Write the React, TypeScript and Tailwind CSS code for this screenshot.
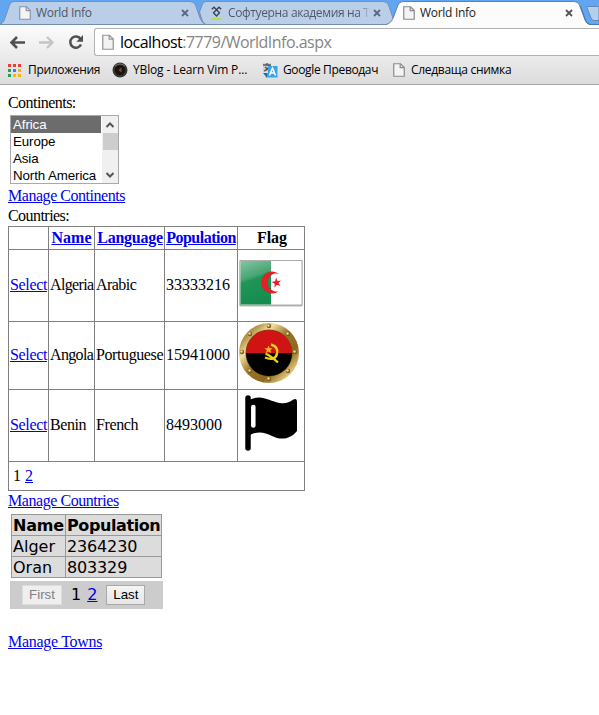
import React from "react";

const UI = "font-['Open_Sans','Noto_Sans',sans-serif]";

function PageIcon({ stroke = "#8a8a8a" }: { stroke?: string }) {
  return (
    <svg width="12" height="14" viewBox="0 0 12 14" className="block shrink-0">
      <path d="M.75 .75H7.5L11.25 4.5V13.25H.75Z" fill="#f4f4f4" stroke={stroke} strokeWidth="1.2" />
      <path d="M7.2 .8V4.7H11.2" fill="none" stroke={stroke} strokeWidth="1.2" />
    </svg>
  );
}

function CloseIcon({ color }: { color: string }) {
  return (
    <svg width="8" height="8" viewBox="0 0 8 8" className="block shrink-0">
      <path d="M1 1L7 7M7 1L1 7" stroke={color} strokeWidth="1.8" />
    </svg>
  );
}

function TabStrip() {
  return (
    <div className="relative h-[25px] bg-[#62a5f1]">
      <svg width="599" height="25" viewBox="0 0 599 25" className="absolute left-0 top-0">
        <path d="M0 24.5C3 23 4 21 5 18L9.500 5Q11 1.500 14 1.500H190Q194 1.500 195.500 5L200 18Q202 23.500 206 24.500Z" fill="#bbcee7" stroke="#7390b5" />
        <path d="M206 24.500Q203 23.500 202 20L199.500 12L202.500 4Q203.500 1.500 206 1.500H383Q387 1.500 388.500 5L393 18Q395 23.500 398 24.500Z" fill="#bbcee7" stroke="#7390b5" />
        <path d="M0 24.500H599" stroke="#728db0" />
        <path d="M386 25C390 23.500 392 21 393.500 17L398 5Q399.500 1.500 403 1.500H574Q578 1.500 579.500 5L585 20Q586.500 24 590 24.500H599V25Z" fill="#fcfcfc" />
        <path d="M386 24.500C390 23.500 392 21 393.500 17L398 5Q399.500 1.500 403 1.500H574Q578 1.500 579.500 5L585 20Q586.500 24 590 24.500H599" fill="none" stroke="#5e83b2" />
        <path d="M582 1L588 18Q590 24 594 24H599V1Z" fill="#62a5f1" />
        <path d="M586.500 6.500H599V20.500H594Q592 20.500 591 18Z" fill="#b4cfee" stroke="#6486b3" />
        <path d="M580.500 6L585.500 20Q587 24 590 24.500H599" fill="none" stroke="#4b78ad" />
      </svg>
      <div className={`relative flex h-[25px] items-center text-[12px] leading-[16px] ${UI}`}>
        <div className="flex w-[200px] shrink-0 items-center pl-[19px] text-[#4c5766]">
          <PageIcon stroke="#8496ad" />
          <span className="ml-[5px] w-[145px] whitespace-nowrap tracking-[-0.3px]">World Info</span>
          <CloseIcon color="#5b697b" />
        </div>
        <div className="flex w-[193px] shrink-0 items-center pl-[11px] text-[#4c5766]">
          <svg width="11" height="14" viewBox="0 0 11 14" className="block shrink-0">
            <path d="M.8 3.200L3 1.200L8.500 6.800L5.500 10L2.500 6.800L8 1.200L10.200 3.200" fill="none" stroke="#354052" strokeWidth="1.300" />
            <path d="M.5 13H10.500" stroke="#b4e51c" strokeWidth="1.500" />
          </svg>
          <span className="ml-[6px] w-[145px] whitespace-nowrap bg-gradient-to-r from-[#4c5766] from-90% to-transparent to-98% bg-clip-text text-transparent tracking-[-0.36px]">Софтуерна академия на Т</span>
          <CloseIcon color="#5b697b" />
        </div>
        <div className="flex shrink-0 items-center pl-[10px] text-[#222]">
          <PageIcon />
          <span className="ml-[5px] w-[145px] whitespace-nowrap tracking-[-0.3px]">World Info</span>
          <CloseIcon color="#555" />
        </div>
      </div>
    </div>
  );
}

function Toolbar() {
  return (
    <div className={`flex h-[60px] flex-col border-b border-[#a5a5a5] bg-gradient-to-b from-[#fcfcfc] to-[#dcdcdc] ${UI}`}>
      <div className="flex h-[31px] shrink-0 items-end">
        <svg width="94" height="31" viewBox="0 0 94 31" className="block">
          <path d="M25 17.500H12M17 12L11.500 17.500L17 23" fill="none" stroke="#505050" strokeWidth="2.600" />
          <path d="M39 17.500H52M47 12L52.500 17.500L47 23" fill="none" stroke="#c5c5c5" strokeWidth="2.400" />
          <path d="M80.500 14A5.600 5.600 0 1 0 81 19.500" fill="none" stroke="#505050" strokeWidth="2.500" />
          <path d="M83 10V16.700H76.300Z" fill="#505050" />
        </svg>
        <div className="flex h-[28px] flex-1 items-center rounded-l-[3px] border border-r-0 border-[#b3b3b3] bg-white pl-[7px] text-[16px] leading-[24px]">
          <svg width="12" height="16" viewBox="0 0 12 16" className="block">
            <path d="M.75 1.250H7.500L11.250 5V15.250H.75ZM7.200 1.500V5.200H11" fill="#f3f3f3" stroke="#929292" strokeWidth="1.200" />
          </svg>
          <span className="ml-[6px] whitespace-nowrap tracking-[-0.53px] text-black">localhost<span className="text-[#858585]">:7779/WorldInfo.aspx</span></span>
        </div>
      </div>
      <div className="flex flex-1 items-center pl-[8px] text-[12px] leading-[16px] text-black">
        <svg width="13" height="13" viewBox="0 0 13 13" className="block shrink-0">
          <path d="M0 0h3v3h-3zM5 0h3v3h-3zM10 0h3v3h-3z" fill="#ed3b35" />
          <path d="M0 5h3v3h-3z" fill="#2b9c55" /><path d="M5 5h3v3h-3z" fill="#2587ec" /><path d="M10 5h3v3h-3z" fill="#f7b40d" />
          <path d="M0 10h3v3h-3z" fill="#2b9c55" /><path d="M5 10h3v3h-3zM10 10h3v3h-3z" fill="#f7b40d" />
        </svg>
        <span className="ml-[7px] w-[84px] shrink-0 whitespace-nowrap tracking-[-0.3px]">Приложения</span>
        <svg width="16" height="16" viewBox="0 0 16 16" className="block shrink-0">
          <circle cx="8" cy="8" r="7.500" fill="#383634" />
          <circle cx="8" cy="8" r="5.300" fill="#171514" />
          <path d="M6.500 8L9.500 5.500V10.500Z" fill="#9c4616" />
          <path d="M3 4Q8 0 13 4" fill="none" stroke="#777" />
        </svg>
        <span className="ml-[5px] w-[129px] shrink-0 whitespace-nowrap tracking-[-0.15px]">YBlog - Learn Vim P...</span>
        <svg width="16" height="16" viewBox="0 0 16 16" className="block shrink-0">
          <path d="M1 1H9V10H1Z" fill="#d0d0d0" />
          <path d="M1 3H9M5 1V3M2 9Q7 7 7 3M3 5L8 9" fill="none" stroke="#555" strokeWidth="1.300" />
          <path d="M6 4H15.500V15.500H4L2 11H6Z" fill="#3aa5e6" />
          <path d="M1 11L5 11L5 15.500Z" fill="#176dac" />
          <path d="M7.500 13.500L10.500 6L13.500 13.500M8.800 11H12.300" fill="none" stroke="#fff" strokeWidth="1.500" />
        </svg>
        <span className="ml-[5px] w-[110px] shrink-0 whitespace-nowrap tracking-[-0.35px]">Google Преводач</span>
        <PageIcon />
        <span className="ml-[6px] whitespace-nowrap tracking-[-0.3px]">Следваща снимка</span>
      </div>
    </div>
  );
}

function Link({ children, className = "" }: { children: React.ReactNode; className?: string }) {
  return <a href="#" className={`whitespace-nowrap text-[#0000ee] underline ${className}`}>{children}</a>;
}

function ContinentList() {
  return (
    <div className="ml-[2px] mt-[2px] flex h-[69px] w-[109px] border border-[#a9a9a9] bg-white font-['Liberation_Sans',Arial,sans-serif] text-[13.333px] leading-[17px]">
      <div className="w-[90px] tracking-[-0.1px]">
        <div className="h-[17px] bg-[#6c6c6c] pl-[2px] text-white">Africa</div>
        <div className="h-[17px] pl-[2px]">Europe</div>
        <div className="h-[17px] pl-[2px]">Asia</div>
        <div className="h-[17px] whitespace-nowrap pl-[2px]">North America</div>
      </div>
      <div className="ml-px flex w-[16px] flex-col items-center bg-[#f0f0f0]">
        <svg width="16" height="17" viewBox="0 0 16 17" className="block"><path d="M4.500 11L8 7.500L11.500 11" fill="none" stroke="#555" strokeWidth="2" /></svg>
        <div className="h-[17px] w-[15px] bg-[#cdcdcd]" />
        <svg width="16" height="17" viewBox="0 0 16 17" className="mt-auto block"><path d="M4.500 7L8 10.500L11.500 7" fill="none" stroke="#555" strokeWidth="2" /></svg>
      </div>
    </div>
  );
}

function AlgeriaFlag() {
  return (
    <svg width="66" height="71" viewBox="0 0 66 71" className="block">
      <defs>
        <linearGradient id="dzGreen" x1="0" y1="0" x2="0.25" y2="1">
          <stop offset="0" stopColor="#84c5a1" /><stop offset=".42" stopColor="#48a574" /><stop offset=".5" stopColor="#1f9658" /><stop offset="1" stopColor="#168d4e" />
        </linearGradient>
      </defs>
      <rect x="1.500" y="11" width="63" height="45.500" rx="1" fill="#bbb" />
      <rect x="2" y="10.500" width="62" height="44.500" fill="#fff" stroke="#999" strokeWidth=".8" />
      <rect x="2.500" y="11" width="30.500" height="43.500" fill="url(#dzGreen)" />
      <path d="M41 24A11 11 0 1 0 41 41A8.500 9 0 1 1 41 24Z" fill="#e12028" />
      <path d="M38 27.500L39.500 31L43 30.500L40.500 33L42.500 36L39 34.800L36.500 37.500L36.700 33.800L33.500 32L37.200 31.200Z" fill="#e12028" />
    </svg>
  );
}

function AngolaFlag() {
  const rivets = [[31, 4], [50, 12], [57, 30], [50, 49], [31, 57], [12, 49], [4, 30], [12, 12]];
  return (
    <svg width="66" height="67" viewBox="0 0 66 67" className="block">
      <defs>
        <linearGradient id="aoGold" x1="0" y1="0" x2="1" y2="1">
          <stop offset="0" stopColor="#8d6b26" /><stop offset=".18" stopColor="#b8954b" /><stop offset=".3" stopColor="#efe1a0" /><stop offset=".48" stopColor="#9a7428" /><stop offset=".68" stopColor="#8d691e" /><stop offset=".85" stopColor="#dfca7c" /><stop offset="1" stopColor="#80601c" />
        </linearGradient>
      </defs>
      <circle cx="31" cy="31" r="30" fill="url(#aoGold)" />
      <circle cx="31" cy="31" r="23.500" fill="#6e4e13" />
      <path d="M8 31A23 23 0 0 1 54 31Z" fill="#d01414" />
      <path d="M8 31A23 23 0 0 0 54 31Z" fill="#000" />
      {rivets.map(([x, y], i) => (
        <g key={i}><circle cx={x} cy={y} r="2.200" fill="#7e5d20" /><circle cx={x - 0.5} cy={y - 0.5} r="1.200" fill="#eadb9b" /></g>
      ))}
      <path d="M33 22.500Q41 25 39 32Q36.500 39.500 27 35.500" fill="none" stroke="#f0d018" strokeWidth="2.400" />
      <path d="M27.500 31.500Q33 34 40 40.500" fill="none" stroke="#f0d018" strokeWidth="2.200" />
      <path d="M30.500 23.500L31.600 26.200L34.500 26.200L32.300 28.200L33.200 31L30.600 29.400L28 31L28.800 28.200L26.500 26.200H29.500Z" fill="#f0c018" />
    </svg>
  );
}

function BlackFlag() {
  return (
    <svg width="66" height="71" viewBox="0 0 66 71" className="block">
      <path d="M10 8V58" stroke="#000" strokeWidth="5.500" strokeLinecap="round" />
      <path d="M12 9.500C24 4 31 11 42 13C50 14 53 11 55.500 9.500Q59 8 59 12V41C52 50 42 50 34 46C26 42 20 41 12 45Z" fill="#000" />
      <path d="M15.300 17V35.500" stroke="#fff" strokeWidth="4.500" strokeLinecap="round" />
    </svg>
  );
}

function CountriesTable() {
  const rows = [
    { name: "Algeria", language: "Arabic", population: "33333216", flag: <AlgeriaFlag /> },
    { name: "Angola", language: "Portuguese", population: "15941000", flag: <AngolaFlag /> },
    { name: "Benin", language: "French", population: "8493000", flag: <BlackFlag /> },
  ];
  const cell = "flex items-center bg-white pb-px pl-px whitespace-nowrap";
  const head = "flex items-center justify-center bg-white font-bold whitespace-nowrap";
  return (
    <div className="grid w-[297px] grid-cols-[39px_45px_69px_72px_66px] grid-rows-[22px_71px_67px_71px_28px] gap-px border border-[#808080] bg-[#808080]">
      <div className={head} />
      <div className={head}><Link>Name</Link></div>
      <div className={`${head} pl-px`}><Link className="tracking-[-0.25px]">Language</Link></div>
      <div className={head}><Link className="tracking-[-0.5px]">Population</Link></div>
      <div className={`${head} pl-[2px] tracking-[-0.1px]`}>Flag</div>
      {rows.map((r) => (
        <React.Fragment key={r.name}>
          <div className={cell}><Link className="tracking-[-0.35px]">Select</Link></div>
          <div className={`${cell} ${r.name === "Benin" ? "tracking-[-0.4px]" : "tracking-[-0.65px]"}`}>{r.name}</div>
          <div className={`${cell} ${r.language === "Arabic" ? "tracking-[-0.55px]" : "tracking-[-0.4px]"}`}>{r.language}</div>
          <div className={cell}>{r.population}</div>
          <div className="bg-white">{r.flag}</div>
        </React.Fragment>
      ))}
      <div className="col-span-5 flex items-center gap-1 bg-white pl-[4px]"><span>1</span><Link>2</Link></div>
    </div>
  );
}

function Towns() {
  const cell = "flex items-center bg-[#dcdcdc] pl-px leading-[20px] pt-[1px] whitespace-nowrap";
  return (
    <div className="ml-[2px] mt-[3px] w-[153px] font-['DejaVu_Sans',Verdana,sans-serif]">
      <div className="ml-px grid w-[151px] grid-cols-[53px_95px] grid-rows-[20px_20px_20px] gap-px border border-[#999] bg-[#999]">
        <div className={`${cell} font-bold tracking-[-0.2px]`}>Name</div>
        <div className={`${cell} font-bold tracking-[-0.4px]`}>Population</div>
        <div className={cell}>Alger</div>
        <div className={`${cell} tracking-[-0.15px]`}>2364230</div>
        <div className={cell}>Oran</div>
        <div className={`${cell} tracking-[-0.15px]`}>803329</div>
      </div>
      <div className="mt-[3px] flex h-[28px] items-center bg-[#ccc] pl-[12px]">
        <button className="h-[20px] w-[40px] border border-[#ddd] bg-[#efefef] font-['Liberation_Sans',Arial,sans-serif] text-[13.333px] leading-[18px] text-[#808080]">First</button>
        <span className="ml-[9px]">1</span>
        <Link className="ml-[6px]">2</Link>
        <button className="ml-[9px] h-[20px] w-[39px] border border-[#a9a9a9] bg-gradient-to-b from-[#f5f5f5] to-[#e6e6e6] font-['Liberation_Sans',Arial,sans-serif] text-[13.333px] leading-[18px] text-black">Last</button>
      </div>
    </div>
  );
}

export default function App() {
  return (
    <div className="h-[715px] w-[599px] overflow-hidden bg-white">
      <TabStrip />
      <Toolbar />
      <main className="flex flex-col items-start pl-[8px] pt-[8px] font-['Liberation_Serif','Times_New_Roman',serif] text-[16px] leading-[20px] text-black">
        <div className="tracking-[-0.55px]">Continents:</div>
        <ContinentList />
        <div className="mt-[2px]"><Link className="tracking-[-0.46px]">Manage Continents</Link></div>
        <div className="tracking-[-0.55px]">Countries:</div>
        <CountriesTable />
        <div><Link className="tracking-[-0.44px]">Manage Countries</Link></div>
        <Towns />
        <div className="mt-[23px]"><Link className="tracking-[-0.3px]">Manage Towns</Link></div>
      </main>
    </div>
  );
}
